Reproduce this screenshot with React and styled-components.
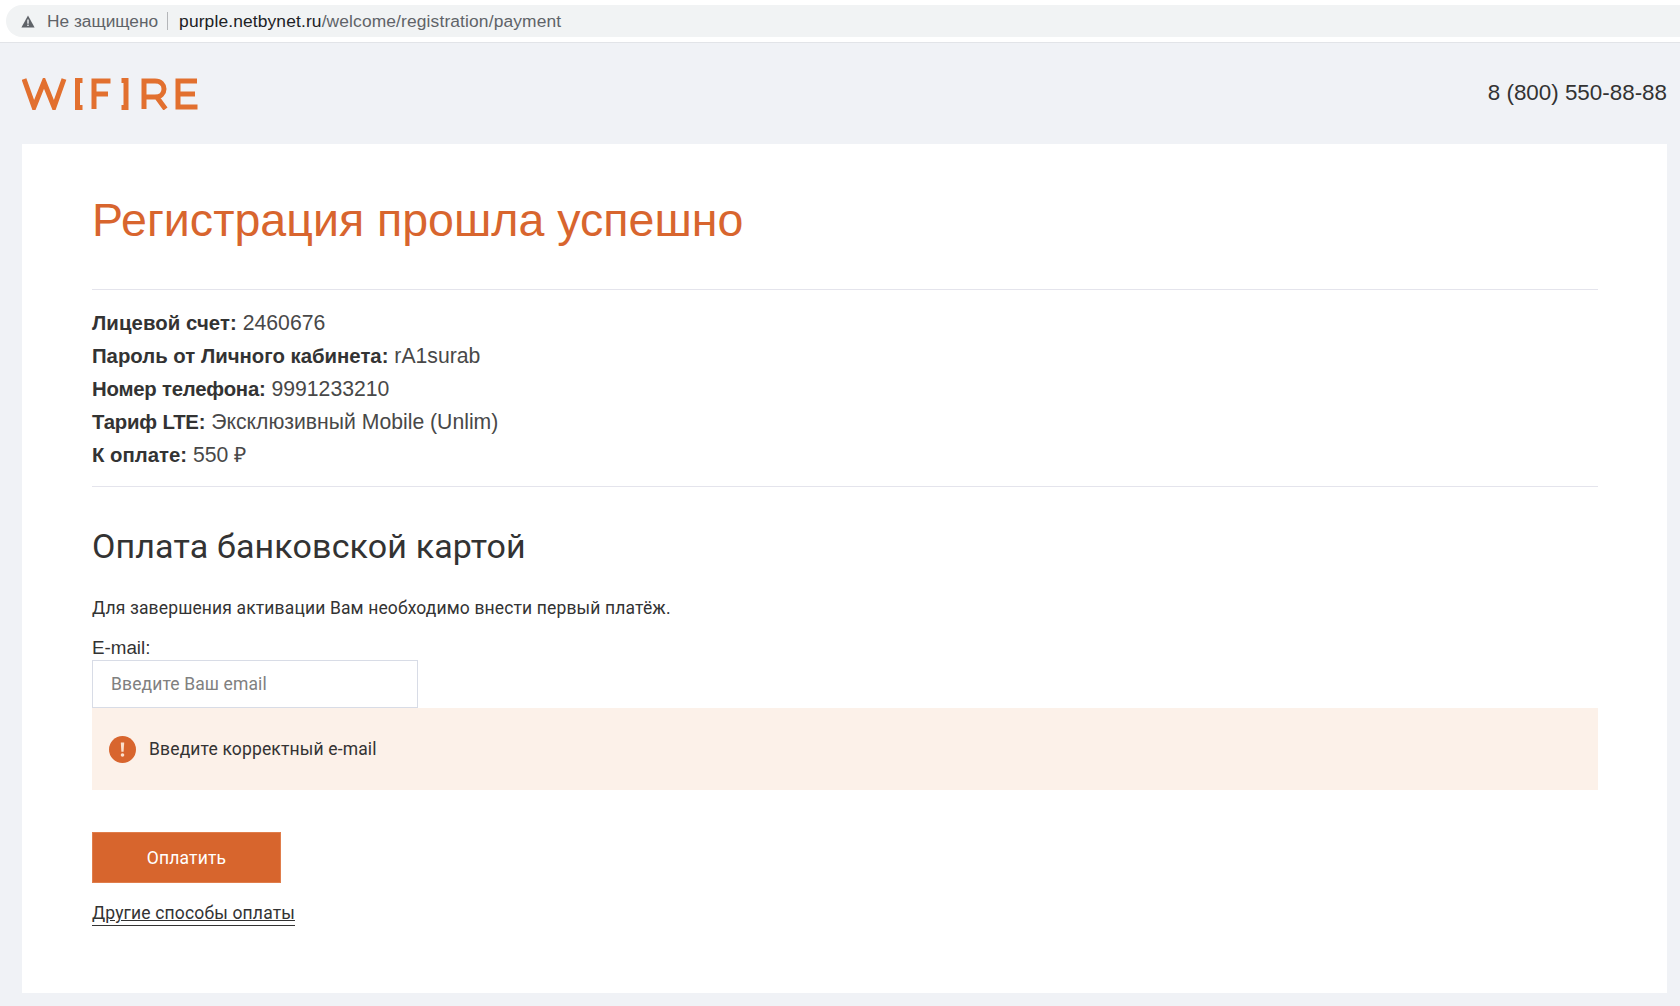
import React from "react";
import styled, { createGlobalStyle } from "styled-components";

const Global = createGlobalStyle`
  html, body { margin: 0; padding: 0; background: #f0f2f6; }
  * { box-sizing: border-box; }
`;
const Page = styled.div`
  width: 1680px; height: 1006px; overflow: hidden; display: flex; flex-direction: column;
  background: #f0f2f6; color: #333; font-family: "Liberation Sans", Arial, sans-serif;
`;
const Chrome = styled.div`
  height: 43px; background: #fff; border-bottom: 1px solid #e2e4e8; padding: 5px 0 0 6px; flex: none;
`;
const AddressBar = styled.div`
  height: 32px; background: #f1f3f4; border-radius: 16px 0 0 16px; display: flex; align-items: center;
  padding-left: 15px; font-family: "Liberation Sans", Arial, sans-serif; font-size: 17.4px; letter-spacing: .13px;
`;
const Insecure = styled.span` color: #5f6368; margin-left: 12px; font-size: 17.3px; letter-spacing: 0; `;
const Divider = styled.span` width: 1px; height: 18px; background: #b4b6b9; margin: 0 11px 0 9px; `;
const Host = styled.span` color: #202124; `;
const Path = styled.span` color: #5f6368; `;
const Header = styled.header`
  height: 101px; flex: none; display: flex; align-items: center; justify-content: space-between;
  padding: 0 13px 0 22px;
`;
const Phone = styled.div` font-size: 22.4px; color: #333; margin-bottom: 1px; `;
const Card = styled.main`
  width: 1645px; height: 849px; margin-left: 22px; background: #fff; padding: 0 69px 0 70px; flex: none;
  display: flex; flex-direction: column;
`;
const Title = styled.h1`
  margin: 44px 0 0; font: 400 46.55px/64px "Liberation Sans", Arial, sans-serif; color: #d8652e; white-space: nowrap;
`;
const Rule = styled.hr` margin: 0; border: 0; height: 1px; background: #e4e4ec; `;
const TopRule = styled(Rule)` margin-top: 37px; `;
const Info = styled.div` padding: 16px 0 15px; `;
const Row = styled.div` font-size: 21.2px; line-height: 33px; color: #484848; white-space: nowrap; `;
const Key = styled.b`
  color: #333; font-weight: 700; font-size: 20.35px; line-height: 1;
  letter-spacing: ${(p) => p.$track || 0}px;
`;
const Subtitle = styled.h2`
  margin: 36px 0 0; font: 400 34px/46px Roboto, sans-serif; color: #333; letter-spacing: .15px;
`;
const Lead = styled.p`
  margin: 26px 0 0; font: 400 17.5px/26px Roboto, sans-serif; color: #333; letter-spacing: .14px;
`;
const Label = styled.label`
  display: block; margin-top: 17px; font-size: 18.8px; line-height: 20px; color: #333;
`;
const Input = styled.input`
  display: block; width: 326px; height: 48px; margin-top: 2px; border: 1px solid #d8dce6; background: #fff;
  padding: 0 18px; font: 400 17.5px Roboto, sans-serif; letter-spacing: .12px; outline: none; border-radius: 0;
  &::placeholder { color: #808080; opacity: 1; }
`;
const ErrorBox = styled.div`
  height: 82px; background: #fcf1e9; display: flex; align-items: center; padding-left: 17px; gap: 13px;
  font: 400 17.5px Roboto, sans-serif; letter-spacing: .15px; color: #333;
`;
const Pay = styled.button`
  width: 189px; height: 51px; margin-top: 42px; background: #d7652d; border: 1px solid #e07d4b; color: #fff;
  font: 400 17.5px Roboto, sans-serif; letter-spacing: .15px; padding: 0; border-radius: 0;
`;
const Other = styled.a`
  align-self: flex-start; margin-top: 20px; font: 400 17.5px/21px Roboto, sans-serif; letter-spacing: .15px; color: #333;
  padding-bottom: 1px; border-bottom: 1px solid #333;
`;

const Warn = () => (
  <svg width="14" height="13" viewBox="0 0 14 13"><path d="M7 .5 13.6 12.5H.4Z" fill="#5f6368"/><rect x="6.3" y="4.5" width="1.4" height="4.2" fill="#f1f3f4"/><rect x="6.3" y="9.6" width="1.4" height="1.4" fill="#f1f3f4"/></svg>
);
const Alert = () => (
  <svg width="27" height="27" viewBox="0 0 27 27"><circle cx="13.5" cy="13.5" r="13.5" fill="#d8652e"/><path d="M11.8 6.5h3.4l-.6 9.2h-2.2Z" fill="#fbe0cd"/><circle cx="13.5" cy="19" r="1.8" fill="#fbe0cd"/></svg>
);
const Logo = () => (
  <svg width="176" height="32" viewBox="0 0 176 32" role="img" aria-label="WIFIRE" fill="none" stroke="#e2702f" strokeWidth="5">
    <path d="M2 1 12 29 22 4 32 29 42 1" />
    <path d="M55.5 1V31M53 2.5H60.5M53 29.5H60.5" />
    <path d="M72 31V3H88.5M72 16H86" />
    <path d="M104 1V31M99.5 2.5H106.5M99.5 29.5H106.5" />
    <path d="M122 31V3H133C145 3 145 19 133 19H122M134 18 143.5 31" />
    <path d="M175 3H156V29H175.5M156 16H173" />
  </svg>
);

export default function App() {
  return (
    <Page>
      <Global />
      <Chrome>
        <AddressBar>
          <Warn />
          <Insecure>Не защищено</Insecure>
          <Divider />
          <Host>purple.netbynet.ru</Host>
          <Path>/welcome/registration/payment</Path>
        </AddressBar>
      </Chrome>
      <Header>
        <Logo />
        <Phone>8 (800) 550-88-88</Phone>
      </Header>
      <Card>
        <Title>Регистрация прошла успешно</Title>
        <TopRule />
        <Info>
          <Row><Key $track={0.08}>Лицевой счет:</Key> 2460676</Row>
          <Row><Key>Пароль от Личного кабинета:</Key> rA1surab</Row>
          <Row><Key $track={-0.22}>Номер телефона:</Key> 9991233210</Row>
          <Row><Key $track={-0.2}>Тариф LTE:</Key> Эксклюзивный Mobile (Unlim)</Row>
          <Row><Key>К оплате:</Key> 550 ₽</Row>
        </Info>
        <Rule />
        <Subtitle>Оплата банковской картой</Subtitle>
        <Lead>Для завершения активации Вам необходимо внести первый платёж.</Lead>
        <Label htmlFor="email">E-mail:</Label>
        <Input id="email" placeholder="Введите Ваш email" />
        <ErrorBox><Alert />Введите корректный e-mail</ErrorBox>
        <Pay>Оплатить</Pay>
        <Other href="#">Другие способы оплаты</Other>
      </Card>
    </Page>
  );
}
